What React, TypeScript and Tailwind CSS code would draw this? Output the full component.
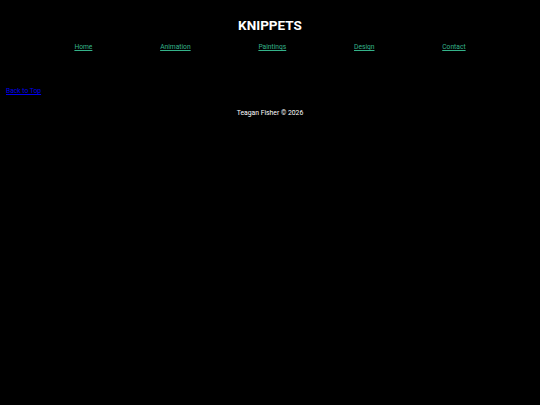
const links = ['Home', 'Animation', 'Paintings', 'Design', 'Contact']

export default function App() {
  return (
    <div className="min-h-[405px] bg-black text-white font-['Roboto',sans-serif]">
      {/* Header */}
      <header className="pt-[16px] text-center">
        <h1 className="text-[13.5px] font-bold leading-[18px]">KNIPPETS</h1>
        <nav className="mt-[8px]">
          <ul className="mx-auto flex w-[85%] justify-around text-[6.7px] leading-[10px]">
            {links.map((l) => (
              <li key={l}>
                <a href="#" className="text-[#34b38a] underline">{l}</a>
              </li>
            ))}
          </ul>
        </nav>
      </header>

      <main className="h-[34px]" />

      <a href="#" className="ml-[6px] block text-[6.7px] leading-[10px] text-[#0000ee] underline">
        Back to Top
      </a>

      <footer className="mt-[12px] text-center text-[6.8px] leading-[10px]">
        Teagan Fisher © 2026
      </footer>
    </div>
  )
}
